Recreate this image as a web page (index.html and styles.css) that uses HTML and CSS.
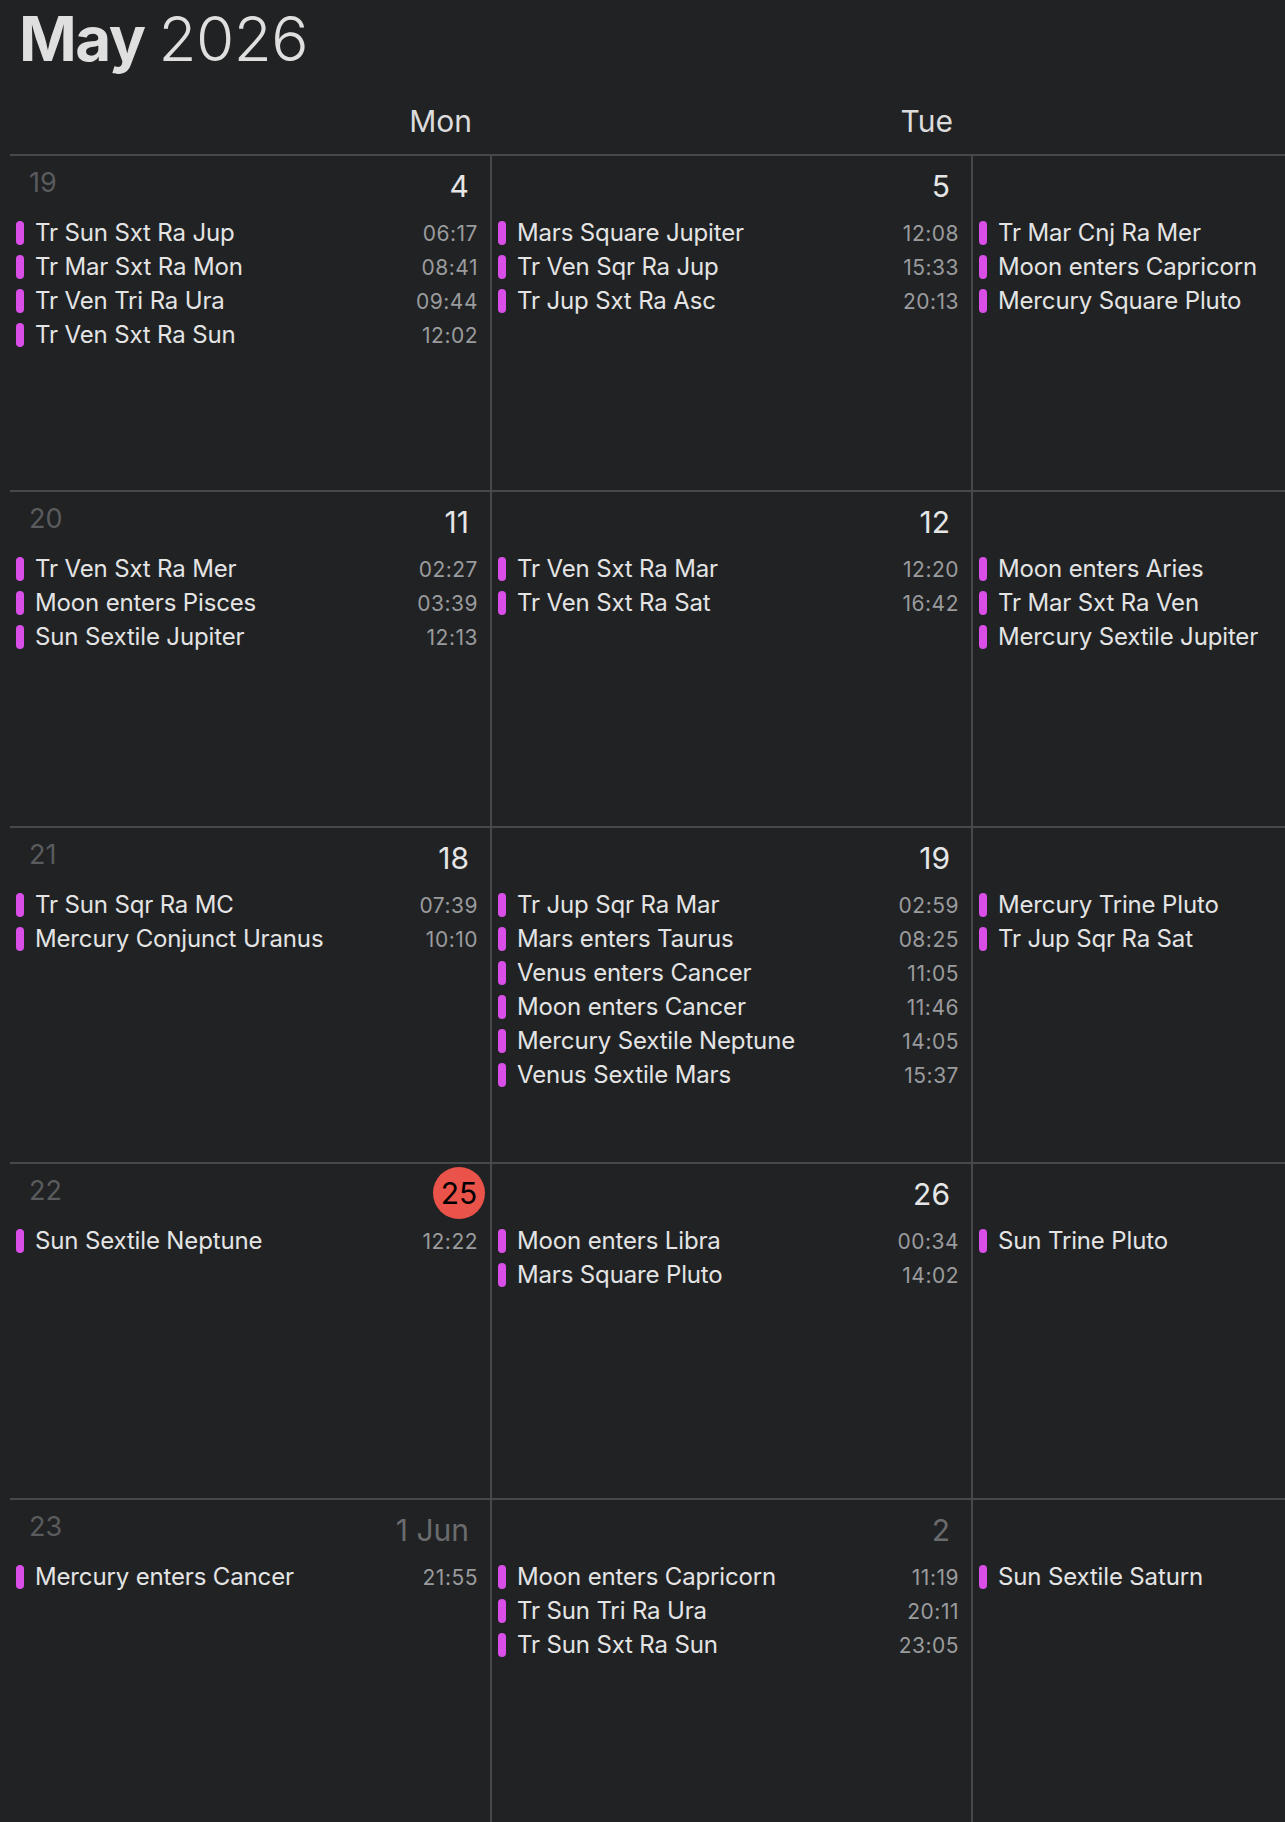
FILE: index.html
```html
<!DOCTYPE html>
<html lang="en">
<head>
<meta charset="utf-8">
<title>May 2026</title>
<link rel="stylesheet" href="styles.css">
</head>
<body>
<div class="page">
  <h1 class="title"><b>May</b> 2026</h1>
  <div class="calendar">
    <div class="dow">Mon</div>
    <div class="dow">Tue</div>
    <div class="dow"></div>

    <!-- Week 19 -->
    <div class="cell">
      <div class="head"><span class="wk">19</span><span class="dn">4</span></div>
      <div class="ev"><i class="bar"></i><span class="name">Tr Sun Sxt Ra Jup</span><span class="time">06:17</span></div>
      <div class="ev"><i class="bar"></i><span class="name">Tr Mar Sxt Ra Mon</span><span class="time">08:41</span></div>
      <div class="ev"><i class="bar"></i><span class="name">Tr Ven Tri Ra Ura</span><span class="time">09:44</span></div>
      <div class="ev"><i class="bar"></i><span class="name">Tr Ven Sxt Ra Sun</span><span class="time">12:02</span></div>
    </div>
    <div class="cell side">
      <div class="head"><span class="dn">5</span></div>
      <div class="ev"><i class="bar"></i><span class="name">Mars Square Jupiter</span><span class="time">12:08</span></div>
      <div class="ev"><i class="bar"></i><span class="name">Tr Ven Sqr Ra Jup</span><span class="time">15:33</span></div>
      <div class="ev"><i class="bar"></i><span class="name">Tr Jup Sxt Ra Asc</span><span class="time">20:13</span></div>
    </div>
    <div class="cell side">
      <div class="head"></div>
      <div class="ev"><i class="bar"></i><span class="name">Tr Mar Cnj Ra Mer</span></div>
      <div class="ev"><i class="bar"></i><span class="name">Moon enters Capricorn</span></div>
      <div class="ev"><i class="bar"></i><span class="name">Mercury Square Pluto</span></div>
    </div>

    <!-- Week 20 -->
    <div class="cell">
      <div class="head"><span class="wk">20</span><span class="dn">11</span></div>
      <div class="ev"><i class="bar"></i><span class="name">Tr Ven Sxt Ra Mer</span><span class="time">02:27</span></div>
      <div class="ev"><i class="bar"></i><span class="name">Moon enters Pisces</span><span class="time">03:39</span></div>
      <div class="ev"><i class="bar"></i><span class="name">Sun Sextile Jupiter</span><span class="time">12:13</span></div>
    </div>
    <div class="cell side">
      <div class="head"><span class="dn">12</span></div>
      <div class="ev"><i class="bar"></i><span class="name">Tr Ven Sxt Ra Mar</span><span class="time">12:20</span></div>
      <div class="ev"><i class="bar"></i><span class="name">Tr Ven Sxt Ra Sat</span><span class="time">16:42</span></div>
    </div>
    <div class="cell side">
      <div class="head"></div>
      <div class="ev"><i class="bar"></i><span class="name">Moon enters Aries</span></div>
      <div class="ev"><i class="bar"></i><span class="name">Tr Mar Sxt Ra Ven</span></div>
      <div class="ev"><i class="bar"></i><span class="name">Mercury Sextile Jupiter</span></div>
    </div>

    <!-- Week 21 -->
    <div class="cell">
      <div class="head"><span class="wk">21</span><span class="dn">18</span></div>
      <div class="ev"><i class="bar"></i><span class="name">Tr Sun Sqr Ra MC</span><span class="time">07:39</span></div>
      <div class="ev"><i class="bar"></i><span class="name">Mercury Conjunct Uranus</span><span class="time">10:10</span></div>
    </div>
    <div class="cell side">
      <div class="head"><span class="dn">19</span></div>
      <div class="ev"><i class="bar"></i><span class="name">Tr Jup Sqr Ra Mar</span><span class="time">02:59</span></div>
      <div class="ev"><i class="bar"></i><span class="name">Mars enters Taurus</span><span class="time">08:25</span></div>
      <div class="ev"><i class="bar"></i><span class="name">Venus enters Cancer</span><span class="time">11:05</span></div>
      <div class="ev"><i class="bar"></i><span class="name">Moon enters Cancer</span><span class="time">11:46</span></div>
      <div class="ev"><i class="bar"></i><span class="name">Mercury Sextile Neptune</span><span class="time">14:05</span></div>
      <div class="ev"><i class="bar"></i><span class="name">Venus Sextile Mars</span><span class="time">15:37</span></div>
    </div>
    <div class="cell side">
      <div class="head"></div>
      <div class="ev"><i class="bar"></i><span class="name">Mercury Trine Pluto</span></div>
      <div class="ev"><i class="bar"></i><span class="name">Tr Jup Sqr Ra Sat</span></div>
    </div>

    <!-- Week 22 -->
    <div class="cell">
      <div class="head"><span class="wk">22</span><span class="dn today">25</span></div>
      <div class="ev"><i class="bar"></i><span class="name">Sun Sextile Neptune</span><span class="time">12:22</span></div>
    </div>
    <div class="cell side">
      <div class="head"><span class="dn">26</span></div>
      <div class="ev"><i class="bar"></i><span class="name">Moon enters Libra</span><span class="time">00:34</span></div>
      <div class="ev"><i class="bar"></i><span class="name">Mars Square Pluto</span><span class="time">14:02</span></div>
    </div>
    <div class="cell side">
      <div class="head"></div>
      <div class="ev"><i class="bar"></i><span class="name">Sun Trine Pluto</span></div>
    </div>

    <!-- Week 23 -->
    <div class="cell">
      <div class="head"><span class="wk">23</span><span class="dn other">1 Jun</span></div>
      <div class="ev"><i class="bar"></i><span class="name">Mercury enters Cancer</span><span class="time">21:55</span></div>
    </div>
    <div class="cell side">
      <div class="head"><span class="dn other">2</span></div>
      <div class="ev"><i class="bar"></i><span class="name">Moon enters Capricorn</span><span class="time">11:19</span></div>
      <div class="ev"><i class="bar"></i><span class="name">Tr Sun Tri Ra Ura</span><span class="time">20:11</span></div>
      <div class="ev"><i class="bar"></i><span class="name">Tr Sun Sxt Ra Sun</span><span class="time">23:05</span></div>
    </div>
    <div class="cell side">
      <div class="head"></div>
      <div class="ev"><i class="bar"></i><span class="name">Sun Sextile Saturn</span></div>
    </div>
  </div>
</div>
</body>
</html>
```

FILE: styles.css
```css
html, body {
  margin: 0;
  padding: 0;
  background: #212224;
}

body {
  font-family: Inter, "Noto Sans", "Liberation Sans", sans-serif;
  color: #e4e4e4;
}

.page {
  width: 1285px;
  height: 1822px;
  overflow: hidden;
}

.title {
  margin: 0;
  box-sizing: border-box;
  height: 70px;
  padding: 8px 0 0 19px;
  font-size: 62px;
  line-height: 62px;
  font-weight: 300;
  color: #dfdfdf;
  letter-spacing: -0.5px;
  word-spacing: -3px;
}

.title b {
  font-weight: 700;
  letter-spacing: -1.5px;
}

.calendar {
  display: grid;
  grid-template-columns: 480px 481px 481px;
  margin-left: 10px;
  width: 1442px;
}

.dow {
  box-sizing: border-box;
  height: 84px;
  padding: 36px 18px 0 0;
  text-align: right;
  font-size: 30px;
  line-height: 30px;
  color: #dcdcdc;
}

.cell {
  box-sizing: border-box;
  height: 336px;
  border-top: 2px solid #47484b;
}

.cell.side {
  border-left: 2px solid #47484b;
}

.head {
  display: flex;
  align-items: flex-start;
  height: 60px;
}

.wk {
  margin-top: 13px;
  padding-left: 19px;
  font-size: 27px;
  line-height: 27px;
  color: #5a5b5d;
}

.dn {
  margin-left: auto;
  margin-top: 15px;
  padding-right: 21px;
  font-size: 30px;
  line-height: 30px;
  color: #e6e6e6;
}

.dn.other {
  color: #6a6b6d;
}

.dn.today {
  box-sizing: border-box;
  width: 52px;
  height: 52px;
  margin-top: 3px;
  margin-right: 5px;
  padding: 0;
  border-radius: 50%;
  background: #ea5349;
  color: #000;
  line-height: 52px;
  text-align: center;
}

.ev {
  display: flex;
  align-items: baseline;
  height: 34px;
  padding: 0 12px 0 6px;
}

.bar {
  flex: none;
  align-self: center;
  width: 8px;
  height: 24px;
  margin-right: 11px;
  border-radius: 4px;
  background: #d94ee7;
}

.name {
  font-size: 24px;
  line-height: 34px;
  color: #e4e4e4;
  white-space: nowrap;
  letter-spacing: -0.15px;
}

.time {
  margin-left: auto;
  font-size: 21px;
  line-height: 34px;
  color: #9a9b9d;
  letter-spacing: 0.5px;
}
```
